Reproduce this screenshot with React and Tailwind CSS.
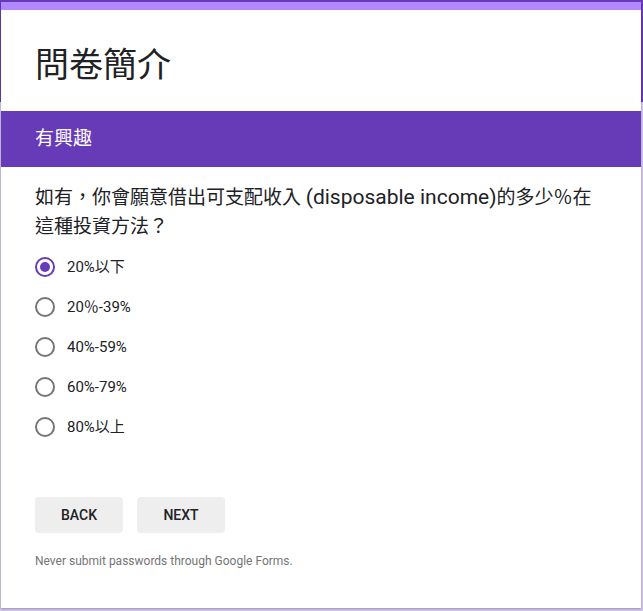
import React, { useState } from 'react';

const options = ['20%以下', '20％-39%', '40%-59%', '60%-79%', '80%以上'];

const Radio = ({ checked }) => (
  <span
    className={`flex h-5 w-5 shrink-0 items-center justify-center rounded-full border-2 ${
      checked ? 'border-[#673ab7]' : 'border-[#757575]'
    }`}
  >
    {checked && <span className="h-[10px] w-[10px] rounded-full bg-[#673ab7]"></span>}
  </span>
);

const App = () => {
  const [selected, setSelected] = useState(0);

  return (
    <div className="min-h-[611px] bg-[linear-gradient(#673ab7_0,#673ab7_102px,#d1c4e9_102px)] pt-[2px] font-['Roboto','Noto_Sans_CJK_TC',sans-serif]">
      <div className="ml-[1px] w-[640px] border-t-8 border-[#b388ff] bg-white shadow-[0_1px_2px_rgba(0,0,0,0.25)]">
        <div className="pl-[34px] pr-9 pb-[26px] pt-[35px]">
          <h1 className="text-[34px] leading-[40px] font-normal text-[#202124]">問卷簡介</h1>
        </div>

        <div className="flex h-14 items-center bg-[#673ab7] pl-[34px] pr-9">
          <h2 className="text-[19px] text-white">有興趣</h2>
        </div>

        <div className="pl-[34px] pr-9 pt-4">
          <p className="text-[19px] leading-[29px] text-[#202124]">
            如有，你會願意借出可支配收入 <span className="text-[21px]">(disposable income)</span>的多少％在
            <br />
            這種投資方法？
          </p>

          <div className="mt-[6px] flex flex-col">
            {options.map((opt, i) => (
              <label
                key={opt}
                className="flex h-10 cursor-pointer items-center gap-3"
                onClick={() => setSelected(i)}
              >
                <Radio checked={selected === i} />
                <span className="text-[15px] text-[#202124]">{opt}</span>
              </label>
            ))}
          </div>

          <div className="mt-[50px] flex gap-[14px]">
            <button className="h-9 w-[88px] rounded bg-[#eeeeee] text-[14px] font-medium text-[#202124]">
              BACK
            </button>
            <button className="h-9 w-[88px] rounded bg-[#eeeeee] text-[14px] font-medium text-[#202124]">
              NEXT
            </button>
          </div>

          <p className="mt-5 pb-[39px] text-[12px] leading-4 text-[#757575]">
            Never submit passwords through Google Forms.
          </p>
        </div>
      </div>
    </div>
  );
};

export default App;
